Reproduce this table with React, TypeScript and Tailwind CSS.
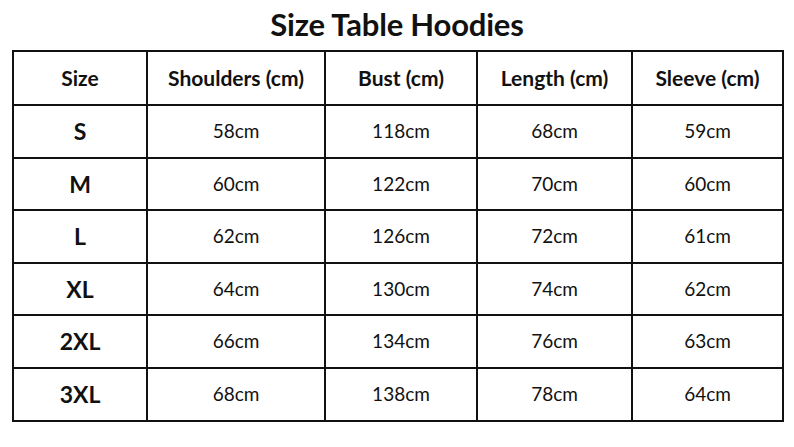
const headers = ["Size", "Shoulders (cm)", "Bust (cm)", "Length (cm)", "Sleeve (cm)"];

const rows = [
  ["S", "58cm", "118cm", "68cm", "59cm"],
  ["M", "60cm", "122cm", "70cm", "60cm"],
  ["L", "62cm", "126cm", "72cm", "61cm"],
  ["XL", "64cm", "130cm", "74cm", "62cm"],
  ["2XL", "66cm", "134cm", "76cm", "63cm"],
  ["3XL", "68cm", "138cm", "78cm", "64cm"],
];

const widths = ["w-[134px]", "w-[178px]", "w-[152px]", "w-[155px]", "w-[151px]"];

export default function App() {
  return (
    <div
      className="w-[794px] h-[447px] bg-white text-[#111] overflow-hidden"
      style={{ fontFamily: "Lato, 'Open Sans', sans-serif" }}
    >
      <div className="h-[50px] flex items-center justify-center pb-[2px]">
        <h1 className="text-[31px] font-bold tracking-[-0.2px] leading-none">Size Table Hoodies</h1>
      </div>
      <table className="ml-[12px] border-collapse border-2 border-[#111] table-fixed">
        <thead>
          <tr className="h-[54px]">
            {headers.map((h, i) => (
              <th
                key={h}
                className={`${widths[i]} border-2 border-[#111] text-[21px] font-bold text-center align-middle`}
              >
                {h}
              </th>
            ))}
          </tr>
        </thead>
        <tbody>
          {rows.map((r) => (
            <tr key={r[0]} className="h-[52.6px]">
              {r.map((c, i) => (
                <td
                  key={i}
                  className={`border-2 border-[#111] text-center align-middle ${
                    i === 0 ? "text-[23px] font-bold" : "text-[19px] font-normal"
                  }`}
                >
                  {c}
                </td>
              ))}
            </tr>
          ))}
        </tbody>
      </table>
    </div>
  );
}
